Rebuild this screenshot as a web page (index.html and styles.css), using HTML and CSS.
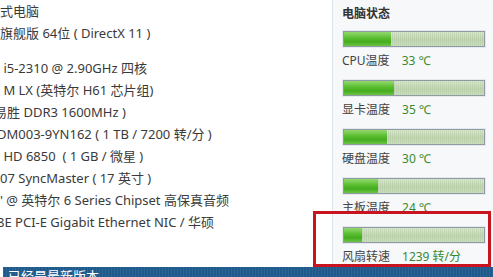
FILE: index.html
```html
<!DOCTYPE html>
<html>
<head>
    <meta charset="utf-8" />
    <title>电脑概览</title>
    <link rel="stylesheet" href="styles.css">
</head>
<body>
    <div class="main">
        <div class="info">
            <div class="row">式电脑</div>
            <div class="row">旗舰版 64位 ( DirectX 11 )</div>
            <div class="row gap">&nbsp;i5-2310 @ 2.90GHz 四核</div>
            <div class="row">&nbsp;M LX (英特尔 H61 芯片组)</div>
            <div class="row"><span class="cut">易</span>胜 DDR3 1600MHz )</div>
            <div class="row"><span class="cut-s">D</span>M003-9YN162 ( 1 TB / 7200 转/分 )</div>
            <div class="row">&nbsp;HD 6850 &nbsp;( 1 GB / 微星 )</div>
            <div class="row">07 SyncMaster ( 17 英寸 )</div>
            <div class="row">' @ 英特尔 6 Series Chipset 高保真音频</div>
            <div class="row"><span class="cut-s">8</span>E PCI-E Gigabit Ethernet NIC / 华硕</div>
        </div>
        <div class="status">
            <div class="status-title">电脑状态</div>
            <div class="item">
                <div class="bar"><div class="fill" style="width: 47px"></div></div>
                <div class="label">CPU温度<span class="value">33 ℃</span></div>
            </div>
            <div class="item">
                <div class="bar"><div class="fill" style="width: 50px"></div></div>
                <div class="label">显卡温度<span class="value">35 ℃</span></div>
            </div>
            <div class="item">
                <div class="bar"><div class="fill" style="width: 43px"></div></div>
                <div class="label">硬盘温度<span class="value">30 ℃</span></div>
            </div>
            <div class="item">
                <div class="bar"><div class="fill" style="width: 34px"></div></div>
                <div class="label">主板温度<span class="value">24 ℃</span></div>
            </div>
            <div class="item">
                <div class="bar"><div class="fill" style="width: 18px"></div></div>
                <div class="label">风扇转速<span class="value">1239 转/分</span></div>
            </div>
        </div>
    </div>
    <div class="footer">已经是最新版本</div>
    <div class="mark"></div>
</body>
</html>
```
FILE: styles.css
```css
body {
    margin: 0;
    padding: 0;
    width: 493px;
    height: 277px;
    overflow: hidden;
    position: relative;
    background: #fff;
    font-family: "Noto Sans", "Noto Sans CJK SC", sans-serif;
    font-size: 12px;
    color: #3a3a3a;
}

.main {
    display: flex;
    height: 267px;
}

.info {
    flex: 1;
    overflow: hidden;
    white-space: nowrap;
    font-size: 13px;
}

.row {
    line-height: 22px;
    height: 22px;
}

.row.gap {
    margin-top: 13px;
}

.cut {
    display: inline-block;
    margin-left: -6px;
}

.cut-s {
    display: inline-block;
    margin-left: -3px;
}

.status {
    width: 151px;
    padding-left: 9px;
    border-left: 1px solid #dfe4ea;
    background: #f6f8fa;
}

.status-title {
    font-weight: bold;
    line-height: 18px;
    margin-top: 5px;
    margin-bottom: 8px;
    color: #333;
}

.item {
    height: 48px;
}

.bar {
    width: 140px;
    height: 14px;
    border: 1px solid #8e9aa4;
    box-shadow: 0 0 0 1px #e6eaee;
    margin-left: 1px;
    margin-top: 1px;
    background:
        repeating-linear-gradient(90deg, rgba(150, 180, 130, 0.25) 0 1px, transparent 1px 2px),
        linear-gradient(#dbe8d2, #c3d7b4 55%, #cfdfc3);
}

.fill {
    height: 14px;
    background: linear-gradient(#93d86e, #58bd2e 45%, #45ac1f 70%, #6cc445);
}

.label {
    line-height: 18px;
    margin-top: 5px;
    color: #444;
}

.value {
    margin-left: 12px;
    color: #3a8a2c;
}

.footer {
    margin-left: 3px;
    height: 10px;
    overflow: hidden;
    line-height: 18px;
    padding-left: 5px;
    font-size: 13px;
    color: #fff;
    background:
        repeating-linear-gradient(90deg, rgba(255, 255, 255, 0.06) 0 1px, transparent 1px 3px),
        #1f5a8c;
}

.mark {
    position: absolute;
    left: 313px;
    top: 211px;
    width: 172px;
    height: 50px;
    border: 3px solid #c8141f;
}
```
